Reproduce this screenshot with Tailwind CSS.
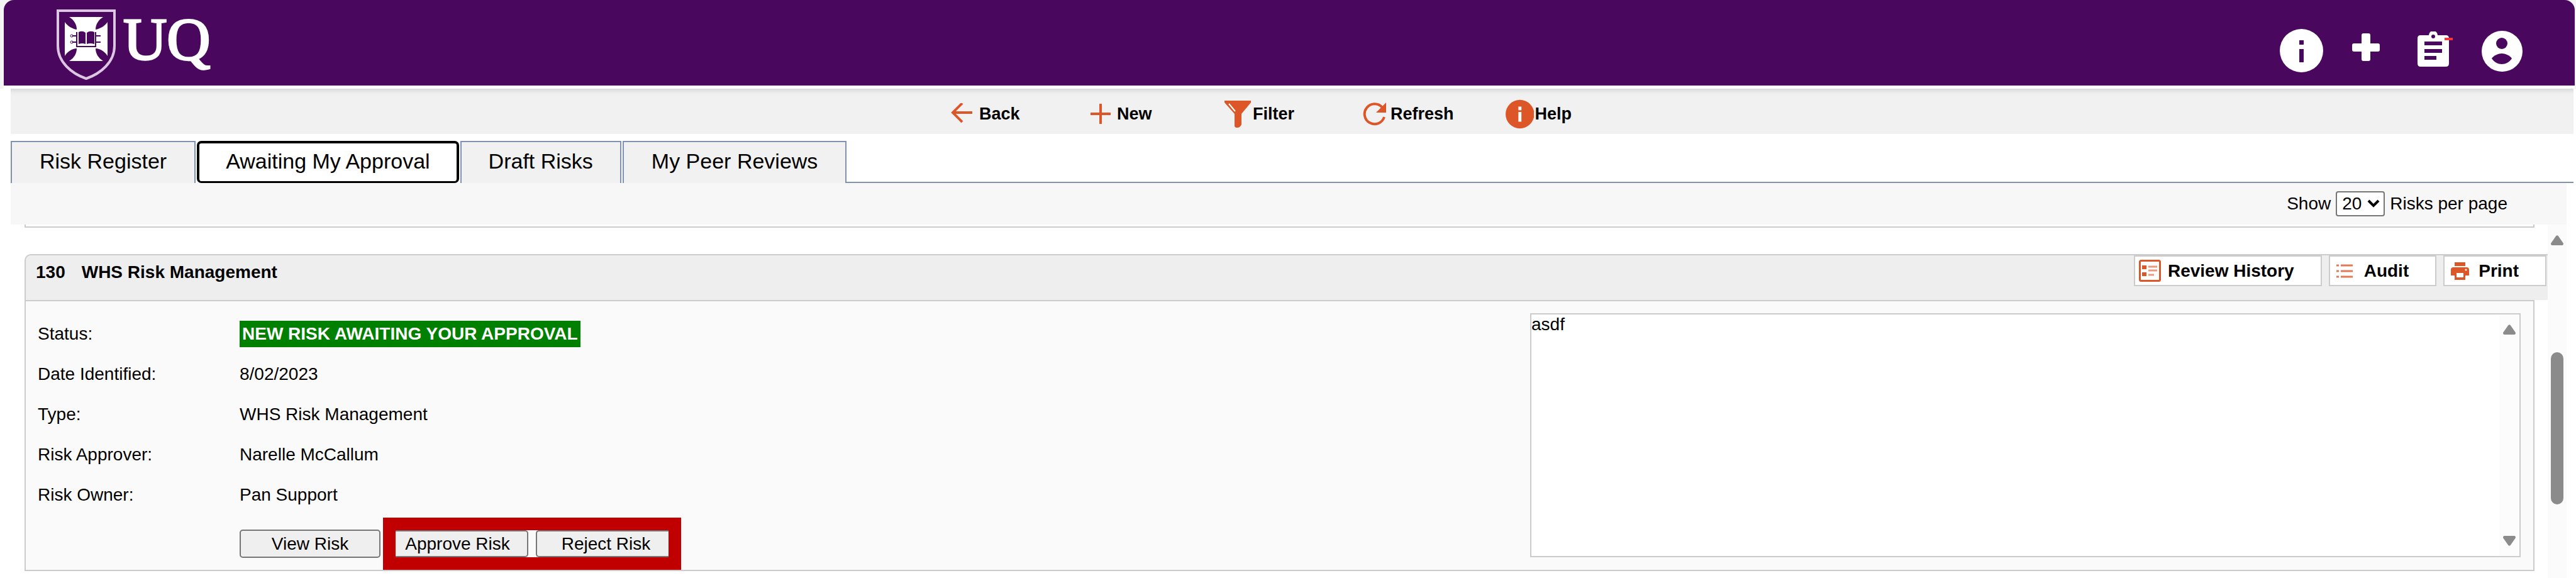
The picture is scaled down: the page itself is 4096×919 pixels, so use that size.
<!DOCTYPE html>
<html lang="en">
<head>
    <meta charset="UTF-8">
    <meta name="viewport" content="width=device-width, initial-scale=1.0">
    <title>UQ Risk Management</title>
    <script src="https://cdn.jsdelivr.net/npm/@tailwindcss/browser@4"></script>
</head>
<body class="min-h-screen flex flex-col bg-white text-black text-[28px] leading-8 font-['Liberation_Sans',Arial,sans-serif]">
    <!-- Top bar -->
    <div class="bg-[#f4f4f4] pl-[6px] pr-[2px]">
        <header class="h-[136px] flex justify-between bg-[#49075e] rounded-t-[16px] pl-[84px] pr-[83px]">
            <a href="#" class="flex items-start gap-3 pt-[15px]" aria-label="UQ home">
                <svg class="w-[94px] h-[112px]" viewBox="0 0 94 112" fill="none">
                    <path d="M2 2H92V58C92 84 70 102 47 110C24 102 2 84 2 58Z" stroke="#dcc6e2" stroke-width="4"/>
                    <path d="M20 12H74C66 17 62 24 62 32C69 31 77 26 81 20V74C77 67 69 62 62 62C62 70 66 77 74 82H20C28 77 32 70 32 62C25 62 17 67 13 74V20C17 26 25 31 32 32C32 24 28 17 20 12Z" fill="#fff"/>
                    <path d="M35 36Q41 33 46 37V55Q41 53 35 55ZM48 37Q53 33 60 36V55Q53 53 48 55Z" fill="#49075e"/>
                    <path d="M32 36V59H62V36M25 42H32M25 52H32M62 42H70M62 52H70" stroke="#49075e" stroke-width="2"/>
                    <circle cx="24" cy="42" r="2" stroke="#49075e"/>
                    <circle cx="24" cy="52" r="2" stroke="#49075e"/>
                </svg>
                <span class="text-[96px] leading-[96px] text-white font-['Liberation_Serif',serif] [-webkit-text-stroke:3px_white]">UQ</span>
            </a>
            <div class="flex items-start pt-[46px] text-white">
                <button type="button" aria-label="Information">
                    <svg class="size-[69px]" viewBox="0 0 69 69"><circle cx="34.5" cy="34.5" r="34.5" fill="#fff"/><path d="M31 18h7v7h-7zM31 32h7v21h-7z" fill="#49075e"/></svg>
                </button>
                <button type="button" aria-label="Add" class="ml-[46px] mt-[7px]">
                    <svg class="size-[44px]" viewBox="0 0 44 44" fill="#fff"><path d="M18 0h8q3 0 3 3v13h12q3 0 3 3v7q0 3-3 3H29v12q0 3-3 3h-8q-3 0-3-3V29H3q-3 0-3-3v-7q0-3 3-3h12V3q0-3 3-3z"/></svg>
                </button>
                <button type="button" aria-label="Tasks" class="relative ml-[60px] mt-[4px]">
                    <svg class="w-[50px] h-[56px]" viewBox="0 0 50 56"><path d="M5 6h13a7 7 0 0 1 14 0h13q5 0 5 5v40q0 5-5 5H5q-5 0-5-5V11q0-5 5-5z" fill="#fff"/><circle cx="25" cy="8" r="3" fill="#49075e"/><path d="M11 16h28v6H11zM11 28h28v6H11zM11 39h19v6H11z" fill="#49075e"/></svg>
                    <span class="absolute -right-[6px] top-[10px] w-[13px] h-[4px] bg-[#f5363d]"></span>
                </button>
                <button type="button" aria-label="Account" class="ml-[52px] mt-[3px]">
                    <svg class="size-[65px]" viewBox="0 0 65 65"><circle cx="32.5" cy="32.5" r="32.5" fill="#fff"/><circle cx="32" cy="20" r="9" fill="#49075e"/><path d="M16 44C19 39 27 36 32 36S45 39 48 44C44 50 38 53 32 53S20 50 16 44Z" fill="#49075e"/></svg>
                </button>
            </div>
        </header>
        <div class="h-[5px] bg-white"></div>
    </div>

    <!-- Toolbar -->
    <nav class="ml-[17px] mr-[4px] h-[72px] grid grid-cols-[222px_213px_220px_227px_105px] justify-center pr-[98px] pt-[8px] items-center bg-[#f1f1f1] text-[27px] font-bold shadow-[inset_0_10px_8px_-8px_rgba(0,0,0,0.15)]">
        <button type="button" class="flex items-center gap-[11px]">
            <svg class="size-[34px]" viewBox="0 0 34 34" fill="none" stroke="#dc5628" stroke-width="4"><path d="M18 0L3 15L18 30M3 15H34"/></svg>
            Back
        </button>
        <button type="button" class="flex items-center gap-[10px]">
            <svg class="size-[32px]" viewBox="0 0 32 32" stroke="#dc5628" stroke-width="4"><path d="M16 0V32M0 16H32"/></svg>
            New
        </button>
        <button type="button" class="flex items-center gap-[3px]">
            <svg class="w-[42px] h-[43px]" viewBox="0 0 42 43"><path d="M0 0H42V3L27 21V38Q25 43 20 43Q16 43 16 40V21L0 3Z" fill="#dc5628"/><path d="M7 5L17 17" stroke="#fff" stroke-width="2"/></svg>
            Filter
        </button>
        <button type="button" class="flex items-center gap-[7px]">
            <svg class="size-[37px]" viewBox="0 0 37 37" fill="none"><path d="M31 8A16 16 0 1 0 34 23" stroke="#dc5628" stroke-width="4"/><path d="M37 0V16H21Z" fill="#dc5628"/></svg>
            Refresh
        </button>
        <button type="button" class="flex items-center gap-px">
            <svg class="size-[47px]" viewBox="0 0 47 47"><circle cx="23.5" cy="23.5" r="23.5" fill="#dc5628"/><path d="M21 11h5v6h-5zM21 20h5v16h-5z" fill="#fff"/></svg>
            Help
        </button>
    </nav>

    <!-- Tabs -->
    <div role="tablist" class="ml-[17px] mr-[4px] mt-[11px] flex items-stretch gap-[2px] h-[67px] text-[34px] leading-10">
        <button type="button" role="tab" class="px-[44px] pb-[5px] bg-[#f1f1f1] border-2 border-b-0 border-[#7f92b0]">Risk Register</button>
        <button type="button" role="tab" aria-selected="true" class="px-[42px] pb-[4px] bg-white border-4 border-b-3 border-black rounded-[7px]">Awaiting My Approval</button>
        <button type="button" role="tab" class="px-[43px] pb-[5px] bg-[#f1f1f1] border-2 border-b-0 border-[#7f92b0]">Draft Risks</button>
        <div class="flex-1 flex">
            <button type="button" role="tab" class="px-[44px] pb-[5px] bg-[#f1f1f1] border-2 border-b-0 border-[#7f92b0]">My Peer Reviews</button>
            <div class="flex-1 border-b-2 border-[#7f92b0]"></div>
        </div>
    </div>

    <!-- Page size -->
    <div class="ml-[17px] mr-[15px] h-[66px] flex justify-end items-center gap-[8px] pr-[94px] bg-[#f7f7f7]">
        <label for="pageSize">Show</label>
        <div class="relative">
            <select id="pageSize" class="block appearance-none w-[78px] h-[40px] pl-[8px] bg-white border-2 border-[#767676] rounded-[4px]">
                <option>20</option>
            </select>
            <svg class="absolute right-[8px] top-[13px] w-[20px] h-[14px] pointer-events-none" viewBox="0 0 20 14" fill="none" stroke="#000" stroke-width="4"><path d="M2 2L10 10L18 2"/></svg>
        </div>
        <span>Risks per page</span>
    </div>

    <!-- Risk list -->
    <main class="ml-[17px] mr-[15px] flex-1 flex">
        <div class="flex-1 pl-[22px]">
            <div class="h-[5px] mr-[21px] border-2 border-t-0 border-[#ccc]"></div>

            <section class="mt-[42px] mr-[21px]">
                <div class="-mr-[21px] flex justify-between bg-[#eee] border-t-2 border-l-2 border-[#ccc] rounded-tl-[10px] h-[73px]">
                    <h2 class="flex gap-[26px] pl-[16px] pt-[11px] font-bold"><span>130</span><span>WHS Risk Management</span></h2>
                    <div class="flex items-start gap-[11px] pr-[2px] font-bold">
                        <button type="button" class="h-[49px] flex items-center gap-[11px] pl-[6px] pr-[42px] bg-white border-2 border-[#ccc]">
                            <svg class="size-[35px]" viewBox="0 0 35 35" fill="none" stroke="#dc5628"><rect x="1.5" y="1.5" width="32" height="32" rx="2" stroke-width="3"/><path d="M5 12h7M5 23h7" stroke-width="6"/><path d="M15 11h14M15 17h14M15 24h9" stroke-width="3" opacity=".6"/></svg>
                            Review History
                        </button>
                        <button type="button" class="h-[49px] flex items-center gap-[18px] pl-[10px] pr-[42px] bg-white border-2 border-[#ccc]">
                            <svg class="w-[26px] h-[24px]" viewBox="0 0 26 24" stroke="#e07a56" stroke-width="3"><path d="M0 3h4M7 3h19M0 12h4M7 12h19M0 21h4M7 21h19"/></svg>
                            Audit
                        </button>
                        <button type="button" class="h-[49px] flex items-center gap-[15px] pl-[10px] pr-[42px] bg-white border-2 border-[#ccc]">
                            <svg class="w-[29px] h-[28px]" viewBox="0 0 29 28"><path d="M6 0h17v6H6zM4 8h21q4 0 4 4v9h-6v7H6v-7H0v-9q0-4 4-4z" fill="#dc5628"/><path d="M9 17h11v7H9z" fill="#fff"/><circle cx="24" cy="12" r="1.5" fill="#fff"/></svg>
                            Print
                        </button>
                    </div>
                </div>

                <div class="grid grid-cols-[2392fr_1575fr] pr-[20px] pt-[19px] bg-[#fafafa] border-2 border-[#ccc]">
                    <div class="pl-[19px]">
                        <dl class="pt-px grid grid-cols-[321px_1fr] auto-rows-[64px] items-center">
                            <dt>Status:</dt>
                            <dd class="flex"><span class="px-[4px] py-[5px] bg-[#008000] text-white font-bold">NEW RISK AWAITING YOUR APPROVAL</span></dd>
                            <dt>Date Identified:</dt>
                            <dd>8/02/2023</dd>
                            <dt>Type:</dt>
                            <dd>WHS Risk Management</dd>
                            <dt>Risk Approver:</dt>
                            <dd>Narelle McCallum</dd>
                            <dt>Risk Owner:</dt>
                            <dd>Pan Support</dd>
                        </dl>
                        <div class="mt-[4px] pl-[321px] flex items-center gap-[4px]">
                            <button type="button" class="w-[224px] h-[45px] bg-[#efefef] border-2 border-[#767676] rounded-[5px]">View Risk</button>
                            <div class="flex gap-[12px] border-20 border-[#c00000]">
                                <button type="button" class="w-[211px] h-[43px] pr-[12px] bg-[#efefef] border-2 border-l-0 border-[#767676] rounded-r-[5px]">Approve Risk</button>
                                <button type="button" class="w-[211px] h-[43px] pl-[10px] bg-[#efefef] border-2 border-r-0 border-[#767676] rounded-l-[5px]">Reject Risk</button>
                            </div>
                        </div>
                    </div>
                    <div class="relative mb-[20px]">
                        <textarea aria-label="Risk description" class="block w-full h-full resize-none overflow-hidden bg-white border-2 border-[#ccc] leading-8">asdf</textarea>
                        <div class="absolute right-[2px] inset-y-[2px] w-[32px] flex flex-col items-center justify-between py-[16px] bg-[#fcfcfc]">
                            <svg class="w-[20px] h-[16px]" viewBox="0 0 20 16" fill="#8b8b8b"><path d="M8 1.5Q10-1 12 1.5L20 13Q20 16 18 16H2Q0 16 0 13Z"/></svg>
                            <svg class="w-[20px] h-[16px]" viewBox="0 0 20 16" fill="#8b8b8b"><path d="M8 14.5Q10 17 12 14.5L20 3Q20 0 18 0H2Q0 0 0 3Z"/></svg>
                        </div>
                    </div>
                </div>
            </section>
        </div>

        <!-- Scroll bar -->
        <div class="w-[30px] flex flex-col items-center pt-[17px] bg-[#fbfbfb]">
            <svg class="w-[20px] h-[16px]" viewBox="0 0 20 16" fill="#8b8b8b"><path d="M8 1.5Q10-1 12 1.5L20 13Q20 16 18 16H2Q0 16 0 13Z"/></svg>
            <div class="mt-[170px] w-[20px] h-[242px] rounded-full bg-[#8b8b8b]"></div>
        </div>
    </main>
</body>
</html>
